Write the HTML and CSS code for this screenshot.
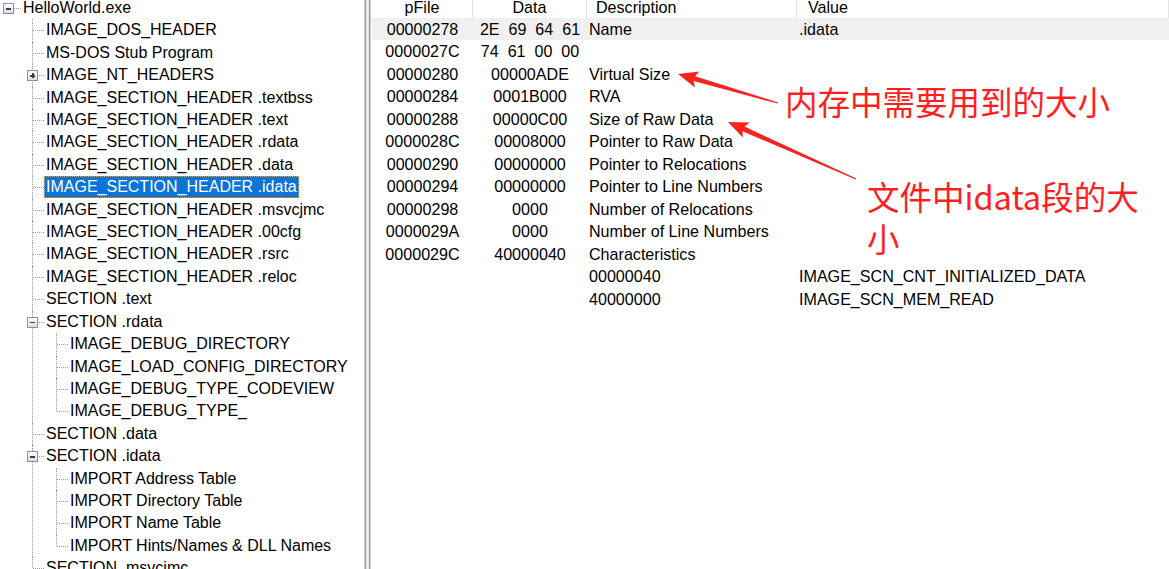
FILE: index.html
```html
<!DOCTYPE html>
<html lang="zh-CN">
<head>
<meta charset="utf-8">
<title>PE View</title>
<link rel="stylesheet" href="styles.css">
</head>
<body>
<div class="app">
  <div class="tree-pane">
    <ul class="tree">
      <li class="root">
        <div class="row root-row"><span class="exp minus"></span><span class="label">HelloWorld.exe</span></div>
        <ul class="kids">
          <li><div class="row"><span class="label">IMAGE_DOS_HEADER</span></div></li>
          <li><div class="row"><span class="label">MS-DOS Stub Program</span></div></li>
          <li><div class="row"><span class="exp plus"></span><span class="label">IMAGE_NT_HEADERS</span></div></li>
          <li><div class="row"><span class="label">IMAGE_SECTION_HEADER .textbss</span></div></li>
          <li><div class="row"><span class="label">IMAGE_SECTION_HEADER .text</span></div></li>
          <li><div class="row"><span class="label">IMAGE_SECTION_HEADER .rdata</span></div></li>
          <li><div class="row"><span class="label">IMAGE_SECTION_HEADER .data</span></div></li>
          <li><div class="row"><span class="label sel">IMAGE_SECTION_HEADER .idata</span></div></li>
          <li><div class="row"><span class="label">IMAGE_SECTION_HEADER .msvcjmc</span></div></li>
          <li><div class="row"><span class="label">IMAGE_SECTION_HEADER .00cfg</span></div></li>
          <li><div class="row"><span class="label">IMAGE_SECTION_HEADER .rsrc</span></div></li>
          <li><div class="row"><span class="label">IMAGE_SECTION_HEADER .reloc</span></div></li>
          <li><div class="row"><span class="label">SECTION .text</span></div></li>
          <li>
            <div class="row"><span class="exp minus"></span><span class="label">SECTION .rdata</span></div>
            <ul class="sub">
              <li><div class="row"><span class="label">IMAGE_DEBUG_DIRECTORY</span></div></li>
              <li><div class="row"><span class="label">IMAGE_LOAD_CONFIG_DIRECTORY</span></div></li>
              <li><div class="row"><span class="label">IMAGE_DEBUG_TYPE_CODEVIEW</span></div></li>
              <li><div class="row"><span class="label">IMAGE_DEBUG_TYPE_</span></div></li>
            </ul>
          </li>
          <li><div class="row"><span class="label">SECTION .data</span></div></li>
          <li>
            <div class="row"><span class="exp minus"></span><span class="label">SECTION .idata</span></div>
            <ul class="sub">
              <li><div class="row"><span class="label">IMPORT Address Table</span></div></li>
              <li><div class="row"><span class="label">IMPORT Directory Table</span></div></li>
              <li><div class="row"><span class="label">IMPORT Name Table</span></div></li>
              <li><div class="row"><span class="label">IMPORT Hints/Names &amp; DLL Names</span></div></li>
            </ul>
          </li>
          <li><div class="row"><span class="label">SECTION .msvcjmc</span></div></li>
          <li><div class="row"><span class="label">SECTION .00cfg</span></div></li>
          <li><div class="row"><span class="label">SECTION .rsrc</span></div></li>
        </ul>
      </li>
    </ul>
  </div>
  <div class="splitter"></div>
  <div class="grid-pane">
    <div class="thead">
      <div class="th center">pFile</div>
      <div class="th center">Data</div>
      <div class="th desc">Description</div>
      <div class="th val">Value</div>
    </div>
    <div class="trow hl"><div class="c1">00000278</div><div class="c2">2E  69  64  61</div><div class="c3">Name</div><div class="c4">.idata</div></div>
    <div class="trow"><div class="c1">0000027C</div><div class="c2">74  61  00  00</div><div class="c3"></div><div class="c4"></div></div>
    <div class="trow"><div class="c1">00000280</div><div class="c2">00000ADE</div><div class="c3">Virtual Size</div><div class="c4"></div></div>
    <div class="trow"><div class="c1">00000284</div><div class="c2">0001B000</div><div class="c3">RVA</div><div class="c4"></div></div>
    <div class="trow"><div class="c1">00000288</div><div class="c2">00000C00</div><div class="c3">Size of Raw Data</div><div class="c4"></div></div>
    <div class="trow"><div class="c1">0000028C</div><div class="c2">00008000</div><div class="c3">Pointer to Raw Data</div><div class="c4"></div></div>
    <div class="trow"><div class="c1">00000290</div><div class="c2">00000000</div><div class="c3">Pointer to Relocations</div><div class="c4"></div></div>
    <div class="trow"><div class="c1">00000294</div><div class="c2">00000000</div><div class="c3">Pointer to Line Numbers</div><div class="c4"></div></div>
    <div class="trow"><div class="c1">00000298</div><div class="c2">0000</div><div class="c3">Number of Relocations</div><div class="c4"></div></div>
    <div class="trow"><div class="c1">0000029A</div><div class="c2">0000</div><div class="c3">Number of Line Numbers</div><div class="c4"></div></div>
    <div class="trow"><div class="c1">0000029C</div><div class="c2">40000040</div><div class="c3">Characteristics</div><div class="c4"></div></div>
    <div class="trow"><div class="c1"></div><div class="c2"></div><div class="c3">00000040</div><div class="c4">IMAGE_SCN_CNT_INITIALIZED_DATA</div></div>
    <div class="trow"><div class="c1"></div><div class="c2"></div><div class="c3">40000000</div><div class="c4">IMAGE_SCN_MEM_READ</div></div>
  </div>

  <svg class="arrows" width="1169" height="569" viewBox="0 0 1169 569">
    <polygon points="678,74 699.4,71.6 695,76.3 778.2,102.4 777.8,103.6 693.6,81.1 695,87.6"/>
    <polygon points="728,122 749.8,122.6 744.5,126.6 856.3,178.4 855.7,179.6 742.5,131.2 742.8,137.6"/>
  </svg>
  <div class="note note1">内存中需要用到的大小</div>
  <div class="note note2">文件中idata段的大小</div>
</div>
</body>
</html>
```
FILE: styles.css
```css
html, body {
  margin: 0;
  padding: 0;
  background: #fff;
}
body {
  width: 1169px;
  height: 569px;
  overflow: hidden;
}
.app {
  position: relative;
  display: flex;
  width: 1169px;
  height: 569px;
  overflow: hidden;
  font-family: "Liberation Sans", Arial, sans-serif;
  font-size: 16px;
  color: #000;
}

/* ---------- tree ---------- */
.tree-pane {
  width: 364px;
  flex: 0 0 364px;
  height: 569px;
  overflow: hidden;
}
.tree, .tree ul {
  list-style: none;
  margin: 0;
  padding: 0;
}
.tree {
  margin-top: -3px;
}
.row {
  position: relative;
  display: flex;
  align-items: stretch;
  height: 22.42px;
  line-height: 22.42px;
  white-space: nowrap;
}
.label {
  display: block;
  padding: 0 2px;
  height: 22px;
  line-height: 22.42px;
}
.label.sel {
  background: #0a74d8;
  color: #fff;
  outline: 1px dotted #e8a850;
  outline-offset: -1px;
}
.root-row {
  padding-left: 21px;
}
.root-row::before {
  content: "";
  position: absolute;
  left: 14px;
  width: 7px;
  top: 11px;
  border-top: 1px dotted #9a9a9a;
}
.root-row .exp {
  left: 3px;
  top: 6px;
  width: 11px;
  height: 11px;
}
.kids {
  padding-left: 32px !important;
}
.sub {
  padding-left: 24px !important;
}
.kids li {
  position: relative;
}
.kids li::before {
  content: "";
  position: absolute;
  left: 0;
  top: 0;
  bottom: 0;
  border-left: 1px dotted #9a9a9a;
}
.kids li:last-child::before {
  bottom: auto;
  height: 11px;
}
.kids li > .row {
  padding-left: 12px;
}
.kids li > .row::before {
  content: "";
  position: absolute;
  left: 1px;
  width: 11px;
  top: 11px;
  border-top: 1px dotted #9a9a9a;
}
.exp {
  position: absolute;
  z-index: 1;
  left: -5px;
  top: 6px;
  width: 11px;
  height: 11px;
  box-sizing: border-box;
  border: 1px solid #8f8f8f;
  background: linear-gradient(#ffffff, #dcdcdc);
}
.exp::after {
  content: "";
  position: absolute;
  left: 2px;
  right: 2px;
  top: 4px;
  height: 1.5px;
  background: #2b3f70;
}
.exp.plus::before {
  content: "";
  position: absolute;
  top: 2px;
  bottom: 2px;
  left: 4px;
  width: 1.5px;
  background: #2b3f70;
}

/* ---------- splitter ---------- */
.splitter {
  flex: 0 0 8px;
  width: 8px;
  height: 569px;
  background: linear-gradient(to right,
    #c4c9d1 0 1px,
    #9c9c9c 1px 2px,
    #e6e6e6 2px 3px,
    #f2f2f2 3px 4px,
    #e6e6e6 4px 5px,
    #9c9c9c 5px 6px,
    #c8ced8 6px 7px,
    #ffffff 7px 8px);
}

/* ---------- grid ---------- */
.grid-pane {
  flex: 1;
  height: 569px;
  overflow: hidden;
  font-size: 16.1px;
}
.thead,
.trow {
  display: grid;
  grid-template-columns: 101px 114px 210px 1fr;
}
.thead {
  height: 17.5px;
  line-height: 15px;
  background: #fff;
}
.th {
  box-sizing: border-box;
  border-right: 1px solid #e3e3e3;
  white-space: nowrap;
}
.th.center {
  text-align: center;
}
.th.desc {
  padding-left: 9px;
}
.th.val {
  padding-left: 11px;
}
.trow {
  height: 22.5px;
  line-height: 22.5px;
  white-space: nowrap;
}
.trow.hl {
  background: #f0f0f0;
}
.c1 {
  text-align: center;
}
.c2 {
  text-align: center;
  white-space: pre;
}
.c3 {
  padding-left: 2px;
}
.c4 {
  padding-left: 2px;
}

/* ---------- annotations ---------- */
.arrows {
  position: absolute;
  left: 0;
  top: 0;
  pointer-events: none;
}
.arrows polygon {
  fill: #f8231f;
}
.note {
  position: absolute;
  font-family: "Noto Sans CJK SC", "Liberation Sans", sans-serif;
  font-size: 32.5px;
  color: #ff1f1f;
  white-space: normal;
}
.note1 {
  left: 785px;
  top: 85px;
  line-height: 32.5px;
  white-space: nowrap;
}
.note2 {
  left: 867px;
  top: 175px;
  width: 290px;
  line-height: 42px;
}
```
